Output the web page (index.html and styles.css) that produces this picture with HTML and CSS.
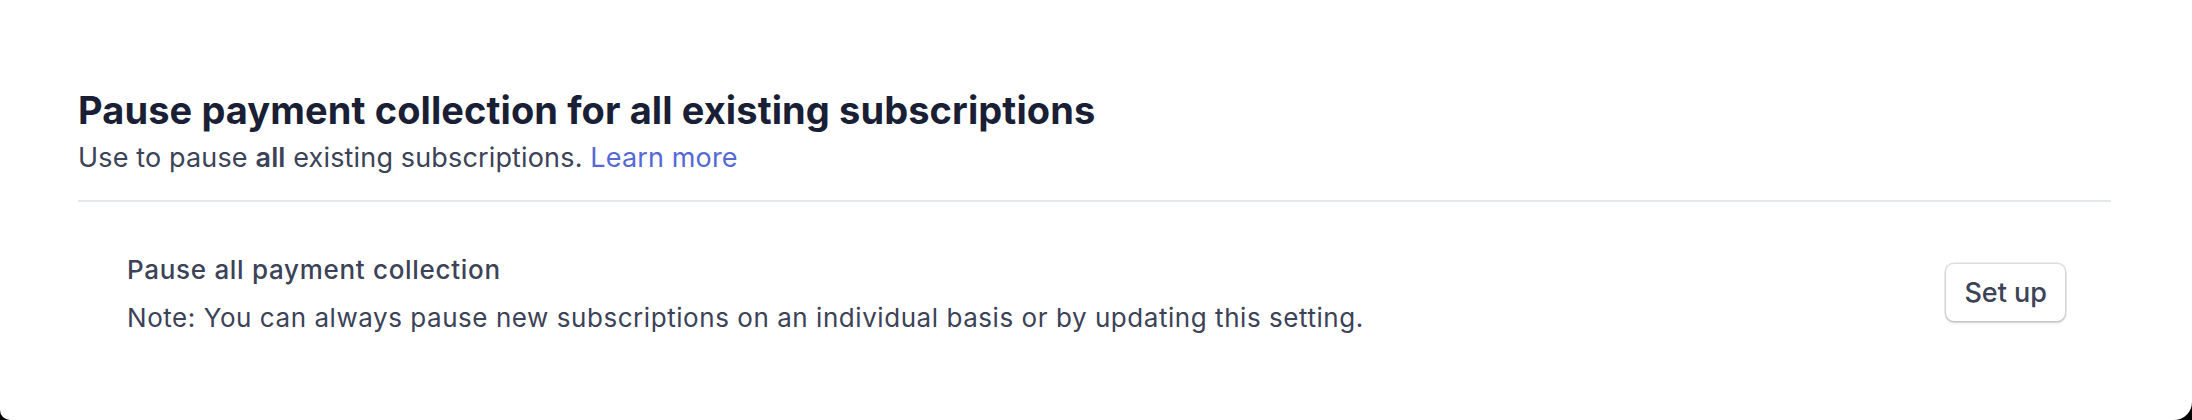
FILE: index.html
```html
<!DOCTYPE html>
<html lang="en">
<head>
    <meta charset="UTF-8">
    <meta name="viewport" content="width=device-width, initial-scale=1.0">
    <title>Subscription settings</title>
    <link rel="stylesheet" href="styles.css">
</head>
<body>
    <div class="panel">
        <div class="panel-header">
            <h1>Pause payment collection for all existing subscriptions</h1>
            <p class="subtitle">Use to pause <strong>all</strong> existing subscriptions. <a href="#">Learn more</a></p>
        </div>
        <div class="setting-row">
            <div class="setting-text">
                <div class="setting-title">Pause all payment collection</div>
                <div class="setting-note">Note: You can always pause new subscriptions on an individual basis or by updating this setting.</div>
            </div>
            <button type="button" class="btn">Set up</button>
        </div>
    </div>
</body>
</html>
```

FILE: styles.css
```css
body {
    margin: 0;
    background-color: #000000;
    font-family: Inter, "Noto Sans", sans-serif;
}
.panel {
    background: #ffffff;
    height: 420px;
    box-sizing: border-box;
    padding: 88px 81px 0 78px;
    border-radius: 0 0 18px 10px;
}
.panel-header {
    border-bottom: 2px solid #e3e8ee;
    padding-bottom: 25px;
}
.panel-header h1 {
    margin: 0;
    font-size: 38px;
    line-height: 44px;
    font-weight: 700;
    letter-spacing: 0.1px;
    color: #1a1f36;
}
.subtitle {
    margin: 9px 0 0;
    font-size: 27px;
    line-height: 34px;
    letter-spacing: 0.15px;
    color: #3c4257;
}
.subtitle strong {
    font-weight: 600;
}
.subtitle a {
    color: #5469d4;
    text-decoration: none;
}
.setting-row {
    display: flex;
    justify-content: space-between;
    align-items: center;
    padding: 52px 46px 0 49px;
}
.setting-title {
    font-size: 26px;
    line-height: 32px;
    font-weight: 500;
    letter-spacing: 0.7px;
    color: #3c4257;
}
.setting-note {
    margin-top: 16px;
    font-size: 26px;
    line-height: 32px;
    letter-spacing: 0.55px;
    color: #3c4257;
}
.btn {
    height: 57px;
    padding: 0 18px;
    margin-bottom: 3px;
    font-family: inherit;
    font-size: 27px;
    font-weight: 500;
    color: #3c4257;
    background: #ffffff;
    border: none;
    border-radius: 8px;
    box-shadow: 0 0 0 1.5px rgba(60, 66, 87, 0.18), 0 2px 3px rgba(0, 0, 0, 0.14);
    cursor: pointer;
}
```
